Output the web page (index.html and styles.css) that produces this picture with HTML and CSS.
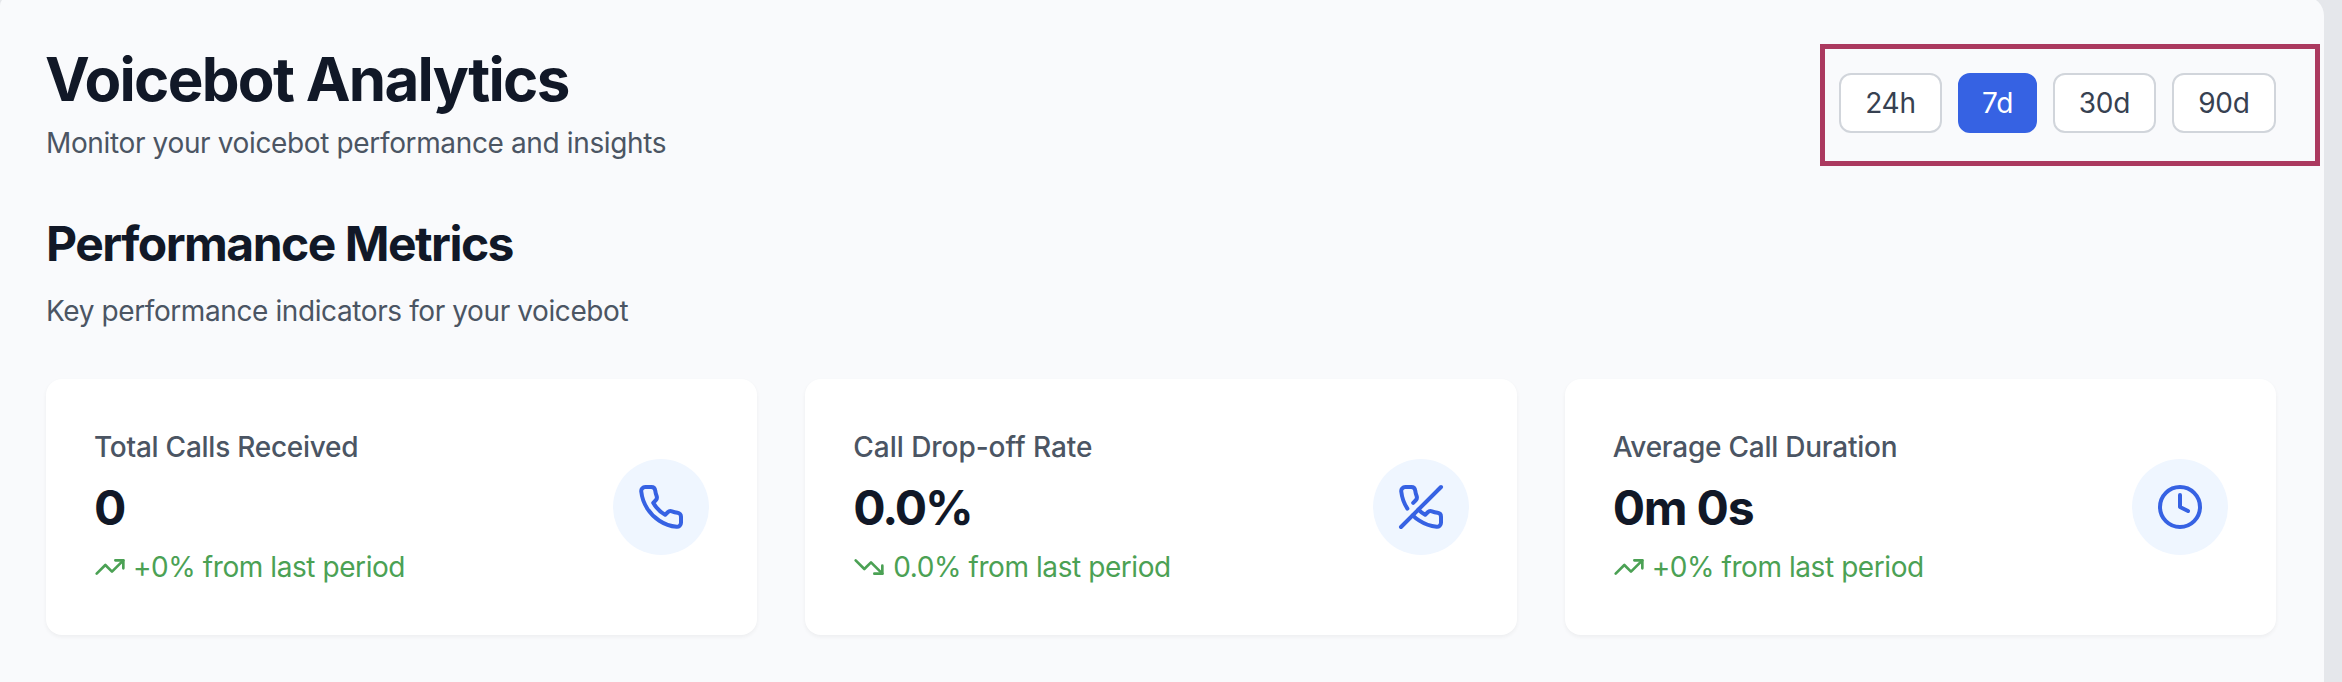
FILE: index.html
```
<!DOCTYPE html>
<html lang="en">
<head>
<meta charset="utf-8">
<title>Voicebot Analytics</title>
<link rel="stylesheet" href="styles.css">
</head>
<body>
<main class="panel">
  <header class="header">
    <div>
      <h1 class="title">Voicebot Analytics</h1>
      <p class="subtitle">Monitor your voicebot performance and insights</p>
    </div>
    <div class="periods">
      <button class="period">24h</button>
      <button class="period active">7d</button>
      <button class="period">30d</button>
      <button class="period wide">90d</button>
      <div class="highlight"></div>
    </div>
  </header>
  <section>
    <h2 class="section-title">Performance Metrics</h2>
    <p class="subtitle section-subtitle">Key performance indicators for your voicebot</p>
    <div class="cards">
      <article class="card">
        <div>
          <p class="label">Total Calls Received</p>
          <p class="value">0</p>
          <p class="trend"><svg class="trend-icon" viewBox="0 0 24 24"><path d="M22 7l-8.5 8.5-5-5L2 17"/><path d="M16 7h6v6"/></svg><span class="signed">+0% from last period</span></p>
        </div>
        <div class="badge"><svg class="badge-icon" viewBox="0 0 24 24"><path d="M22 16.92v3a2 2 0 0 1-2.18 2 19.79 19.79 0 0 1-8.63-3.07 19.5 19.5 0 0 1-6-6 19.79 19.79 0 0 1-3.07-8.67A2 2 0 0 1 4.11 2h3a2 2 0 0 1 2 1.72 12.84 12.84 0 0 0 .7 2.81 2 2 0 0 1-.45 2.11L8.09 9.91a16 16 0 0 0 6 6l1.27-1.27a2 2 0 0 1 2.11-.45 12.84 12.84 0 0 0 2.81.7A2 2 0 0 1 22 16.92z"/></svg></div>
      </article>
      <article class="card">
        <div>
          <p class="label label-drop">Call Drop-off Rate</p>
          <p class="value value-percent">0.0%</p>
          <p class="trend"><svg class="trend-icon" viewBox="0 0 24 24"><path d="M22 17l-8.5-8.5-5 5L2 7"/><path d="M16 17h6v-6"/></svg><span>0.0% from last period</span></p>
        </div>
        <div class="badge"><svg class="badge-icon" viewBox="0 0 24 24"><path d="M10.68 13.31a16 16 0 0 0 3.41 2.6l1.27-1.27a2 2 0 0 1 2.11-.45 12.84 12.84 0 0 0 2.81.7 2 2 0 0 1 1.72 2v3a2 2 0 0 1-2.18 2 19.79 19.79 0 0 1-8.63-3.07 19.42 19.42 0 0 1-3.33-2.67m-2.67-3.34a19.79 19.79 0 0 1-3.07-8.63A2 2 0 0 1 4.11 2h3a2 2 0 0 1 2 1.72 12.84 12.84 0 0 0 .7 2.81 2 2 0 0 1-.45 2.11L8.09 9.91"/><path d="M22 2L2 22"/></svg></div>
      </article>
      <article class="card">
        <div>
          <p class="label">Average Call Duration</p>
          <p class="value">0m 0s</p>
          <p class="trend"><svg class="trend-icon" viewBox="0 0 24 24"><path d="M22 7l-8.5 8.5-5-5L2 17"/><path d="M16 7h6v6"/></svg><span class="signed">+0% from last period</span></p>
        </div>
        <div class="badge"><svg class="badge-icon" viewBox="0 0 24 24"><circle cx="12" cy="12" r="10"/><path d="M12 6v6l4 2"/></svg></div>
      </article>
    </div>
  </section>
</main>
</body>
</html>
```
FILE: styles.css
```
* { box-sizing: border-box; }
body {
  margin: 0;
  height: 682px;
  overflow: hidden;
  background: #e5e7eb;
  font-family: Inter, "Liberation Sans", sans-serif;
  color: #111827;
}
h1, h2, p { margin: 0; }
.panel {
  width: 2324px;
  height: 700px;
  margin-top: -4px;
  padding: 47px 48px 0 46px;
  background: #f9fafc;
  border-radius: 10px 20px 0 0;
}
.header {
  display: flex;
  justify-content: space-between;
  align-items: center;
  margin-bottom: 48px;
}
.title {
  margin: 0 0 8px -1px;
  font-size: 60px;
  line-height: 72px;
  font-weight: 700;
  letter-spacing: -1.7px;
}
.subtitle {
  font-size: 28px;
  line-height: 40px;
  letter-spacing: -0.36px;
  color: #4b5563;
}
.section-subtitle { letter-spacing: -0.4px; }
.periods {
  position: relative;
  display: flex;
  gap: 16px;
}
.period {
  width: 103px;
  height: 60px;
  padding: 0;
  border: 2px solid #d1d5db;
  border-radius: 12px;
  background: #fff;
  color: #374151;
  font: 400 28px/40px Inter, "Liberation Sans", sans-serif;
  letter-spacing: -0.2px;
  white-space: nowrap;
}
.period.wide { width: 104px; }
.period.active {
  width: 79px;
  border-color: #3662e3;
  background: #3662e3;
  color: #fff;
}
.highlight {
  position: absolute;
  left: -19px;
  top: -29px;
  width: 500px;
  height: 122px;
  border: 5px solid #ab395f;
  pointer-events: none;
}
.section-title {
  margin-bottom: 14px;
  font-size: 48px;
  line-height: 66px;
  font-weight: 700;
  letter-spacing: -1.52px;
}
.cards {
  display: grid;
  grid-template-columns: repeat(3, 1fr);
  gap: 48px;
  margin-top: 48px;
}
.card {
  display: flex;
  justify-content: space-between;
  align-items: center;
  height: 256px;
  padding: 48px;
  background: #fff;
  border-radius: 16px;
  box-shadow: 0 2px 4px rgba(0, 0, 0, 0.05);
}
.label {
  font-size: 28px;
  line-height: 40px;
  font-weight: 500;
  letter-spacing: -0.25px;
  color: #4b5563;
}
.label-drop { letter-spacing: -0.04px; }
.value {
  margin: 8px 0 6px;
  font-size: 48px;
  line-height: 66px;
  font-weight: 700;
  letter-spacing: -1.2px;
}
.value-percent { letter-spacing: -2.1px; }
.trend {
  display: flex;
  align-items: center;
  gap: 8px;
  font-size: 28px;
  line-height: 40px;
  letter-spacing: -0.43px;
  color: #4ba154;
}
.signed { margin-left: -1px; }
.trend-icon {
  width: 32px;
  height: 32px;
  fill: none;
  stroke: currentColor;
  stroke-width: 2;
  stroke-linecap: round;
  stroke-linejoin: round;
}
.badge {
  display: flex;
  align-items: center;
  justify-content: center;
  width: 96px;
  height: 96px;
  border-radius: 50%;
  background: #eff6ff;
}
.badge-icon {
  width: 48px;
  height: 48px;
  fill: none;
  stroke: #3662e3;
  stroke-width: 2;
  stroke-linecap: round;
  stroke-linejoin: round;
}
```
